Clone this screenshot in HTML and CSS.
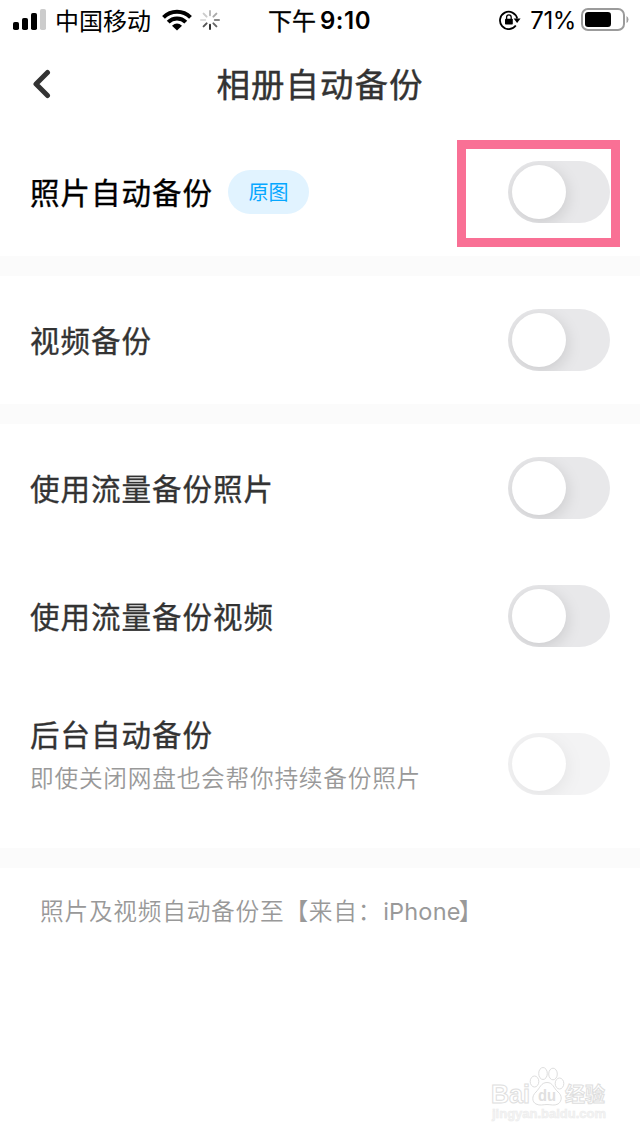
FILE: index.html
```html
<!DOCTYPE html>
<html lang="zh-CN">
<head>
<meta charset="utf-8">
<title>相册自动备份</title>
<link rel="stylesheet" href="styles.css">
</head>
<body>
<div class="status">
  <div class="status-left">
    <svg class="signal" width="34" height="24" viewBox="0 0 34 24">
      <rect x="0" y="15" width="6" height="8" rx="1.8"/><rect x="9" y="11" width="6" height="12" rx="1.8"/><rect x="18" y="6" width="6" height="17" rx="1.8"/><rect x="27" y="2" width="6" height="21" rx="1.8" fill="#ccc"/>
    </svg>
    <span class="carrier">中国移动</span>
    <svg class="wifi" width="30" height="22" viewBox="0 0 30 22">
      <g fill="none" stroke="#000" stroke-width="4"><path d="M1.5 8.3 A19.2 19.2 0 0 1 28.5 8.3"/><path d="M6.2 13.2 A12.4 12.4 0 0 1 23.8 13.2"/></g>
      <path d="M10 16.7 Q15 12.3 20 16.7 L15 21.5Z"/>
    </svg>
    <svg class="spinner" width="20" height="20" viewBox="-10 -10 20 20">
      <g stroke-width="2" stroke-linecap="round">
        <path d="M0-4.8V-9" stroke="#bbb"/><path d="M3.4-3.4L6.4-6.4" stroke="#aaa"/><path d="M4.8 0H9" stroke="#888"/><path d="M3.4 3.4L6.4 6.4" stroke="#666"/><path d="M0 4.8V9" stroke="#333"/><path d="M-3.4 3.4L-6.4 6.4" stroke="#555"/><path d="M-4.8 0H-9" stroke="#ddd"/><path d="M-3.4-3.4L-6.4-6.4" stroke="#ccc"/>
      </g>
    </svg>
  </div>
  <div class="clock"><span class="period">下午</span><span class="time">9:10</span></div>
  <div class="status-right">
    <svg class="lock" width="22" height="20" viewBox="0 0 22 20">
      <path d="M16.8 15.5A8.7 8.7 0 1 1 18.2 8.5" fill="none" stroke="#000" stroke-width="1.8"/>
      <path d="M14.6 8.5H21.6L18.1 13Z"/><rect x="6" y="8.8" width="7.8" height="5.8" rx=".8"/>
      <path d="M7.6 9V7.2a2.3 2.3 0 0 1 4.600 0V9" fill="none" stroke="#000" stroke-width="1.3"/>
    </svg>
    <span class="percent">71%</span>
    <svg class="battery" width="48" height="24" viewBox="0 0 48 24">
      <rect x="1" y="1" width="42" height="21" rx="6" fill="none" stroke="#9b9b9b" stroke-width="2"/>
      <rect x="4" y="4" width="26" height="15" rx="3.2"/><path d="M45.5 8V15Q47.5 14 47.5 11.5T45.5 8Z" fill="#a0a0a0"/>
    </svg>
  </div>
</div>
<header class="header">
  <svg class="back" width="20" height="32" viewBox="0 0 20 32"><path d="M16.500 4.500L5 16L16.500 27.500" fill="none" stroke="#333" stroke-width="5" stroke-linecap="round" stroke-linejoin="round"/></svg>
  <h1 class="title">相册自动备份</h1>
</header>
<main>
  <section class="group">
    <div class="row highlighted"><span class="label primary">照片自动备份</span><span class="tag">原图</span><span class="toggle"><span class="knob"></span></span><div class="marker"></div></div>
  </section>
  <section class="group">
    <div class="row"><span class="label">视频备份</span><span class="toggle"><span class="knob"></span></span></div>
  </section>
  <section class="group">
    <div class="row"><span class="label">使用流量备份照片</span><span class="toggle"><span class="knob"></span></span></div>
    <div class="row"><span class="label">使用流量备份视频</span><span class="toggle"><span class="knob"></span></span></div>
    <div class="row tall"><div class="stack"><span class="label">后台自动备份</span><span class="hint">即使关闭网盘也会帮你持续备份照片</span></div><span class="toggle disabled"><span class="knob"></span></span></div>
  </section>
  <p class="note">照片及视频自动备份至【来自：<span class="device">iPhone</span><span class="close">】</span></p>
</main>
<svg class="watermark" width="124" height="64" viewBox="0 0 124 64">
  <g fill="#fff" stroke="#dedede" stroke-width="1">
    <text class="wm-brand" x="1" y="42" textLength="39" lengthAdjust="spacingAndGlyphs">Bai</text>
    <ellipse cx="44.500" cy="20.500" rx="4.300" ry="5.500"/><ellipse cx="53" cy="12.500" rx="4.300" ry="6"/><ellipse cx="63" cy="13" rx="4.300" ry="5.800"/><ellipse cx="69.500" cy="22.500" rx="4.300" ry="5.500"/>
    <path d="M57 21.500C51 21.500 50 27 46 31C41.500 35 42 41 46 43C50 45 53 43.500 57 43.500S64 45 68 43C72.500 40 72 34 68 31C63.500 27 63 21.500 57 21.500Z"/>
    <text class="wm-cn" x="75" y="41" textLength="40">经验</text>
  </g>
  <text class="wm-du" x="48" y="40" textLength="18" lengthAdjust="spacingAndGlyphs">du</text>
  <text class="wm-url" x="2" y="57" textLength="114" lengthAdjust="spacingAndGlyphs">jingyan.baidu.com</text>
</svg>
</body>
</html>
```
FILE: styles.css
```css
* { box-sizing: border-box; }
body { margin: 0; width: 640px; height: 1136px; overflow: hidden; position: relative; background: #fff; color: #333; font-family: "Noto Sans CJK SC", sans-serif; }
svg { display: block; flex: none; }
.status { height: 40px; display: grid; grid-template-columns: 268px 1fr auto; align-items: center; color: #000; white-space: nowrap; }
.status-left, .status-right, .clock { display: flex; align-items: center; height: 40px; }
.status-left { padding-left: 13px; }
.signal { margin-top: -2px; }
.carrier { font-size: 24px; line-height: 36px; margin-left: 8px; }
.wifi { margin-left: 11px; }
.spinner { margin-left: 8px; }
.period { font-size: 24px; line-height: 36px; -webkit-text-stroke: .3px #000; }
.time { font: 600 24px/36px Inter, sans-serif; margin: 2px 0 0 4px; letter-spacing: .5px; }
.status-right { padding-right: 11px; }
.percent { font: 400 24px/36px Inter, sans-serif; margin: 2px 0 0 9px; letter-spacing: -.4px; }
.battery { margin-left: 5px; }
.header { height: 88px; display: grid; grid-template-columns: 60px 1fr 60px; align-items: center; }
.back { margin-left: 31px; }
.title { margin: -2px 0 0; font-size: 33.5px; font-weight: 400; line-height: 50px; letter-spacing: 1px; text-align: center; -webkit-text-stroke: .4px #333; }
.group { border-bottom: 20px solid #fbfbfb; }
.row { height: 128px; padding: 0 30px; display: flex; align-items: center; position: relative; }
.row.tall { height: 168px; }
.label { margin-top: -2px; font-size: 29.5px; font-weight: 400; line-height: 44px; letter-spacing: 1px; white-space: nowrap; -webkit-text-stroke: .35px currentColor; }
.primary { color: #000; }
.tag { width: 81px; height: 44px; margin-left: 15px; border-radius: 22px; background: #e1f3ff; color: #06a7ff; font-size: 20px; line-height: 43px; text-align: center; }
.toggle { width: 102px; height: 62px; margin-left: auto; padding: 4px; border-radius: 31px; background: #e8e8ea; overflow: hidden; }
.knob { display: block; width: 54px; height: 54px; border-radius: 50%; background: #fff; box-shadow: 1px 4px 16px rgba(0,0,0,.13); }
.toggle.disabled { opacity: .5; }
.marker { position: absolute; left: 457px; top: 12px; width: 163px; height: 107px; border: 9px solid #f97095; }
.stack { display: flex; flex-direction: column; margin-top: -20px; }
.hint { font-size: 23.7px; font-weight: 350; line-height: 36px; margin-top: 4px; letter-spacing: .75px; color: #999; }
.note { margin: 24px 0 0 40px; font-size: 23.7px; line-height: 36px; letter-spacing: .75px; color: #999; font-weight: 350; white-space: nowrap; }
.device { font: 400 23.5px/36px Inter, sans-serif; letter-spacing: .2px; margin-left: 1px; }
.close { margin-left: -2px; }
.watermark { position: absolute; left: 490px; top: 1061px; }
.wm-brand { font: 700 26px "Liberation Sans", sans-serif; }
.wm-du { font: 700 17px "Liberation Sans", sans-serif; fill: #e0e0e0; }
.wm-cn { font: 700 20px "Noto Sans CJK SC", sans-serif; }
.wm-url { font: 700 13px "Liberation Sans", sans-serif; fill: #f4f4f4; stroke: #ebebeb; stroke-width: .5px; }
```
